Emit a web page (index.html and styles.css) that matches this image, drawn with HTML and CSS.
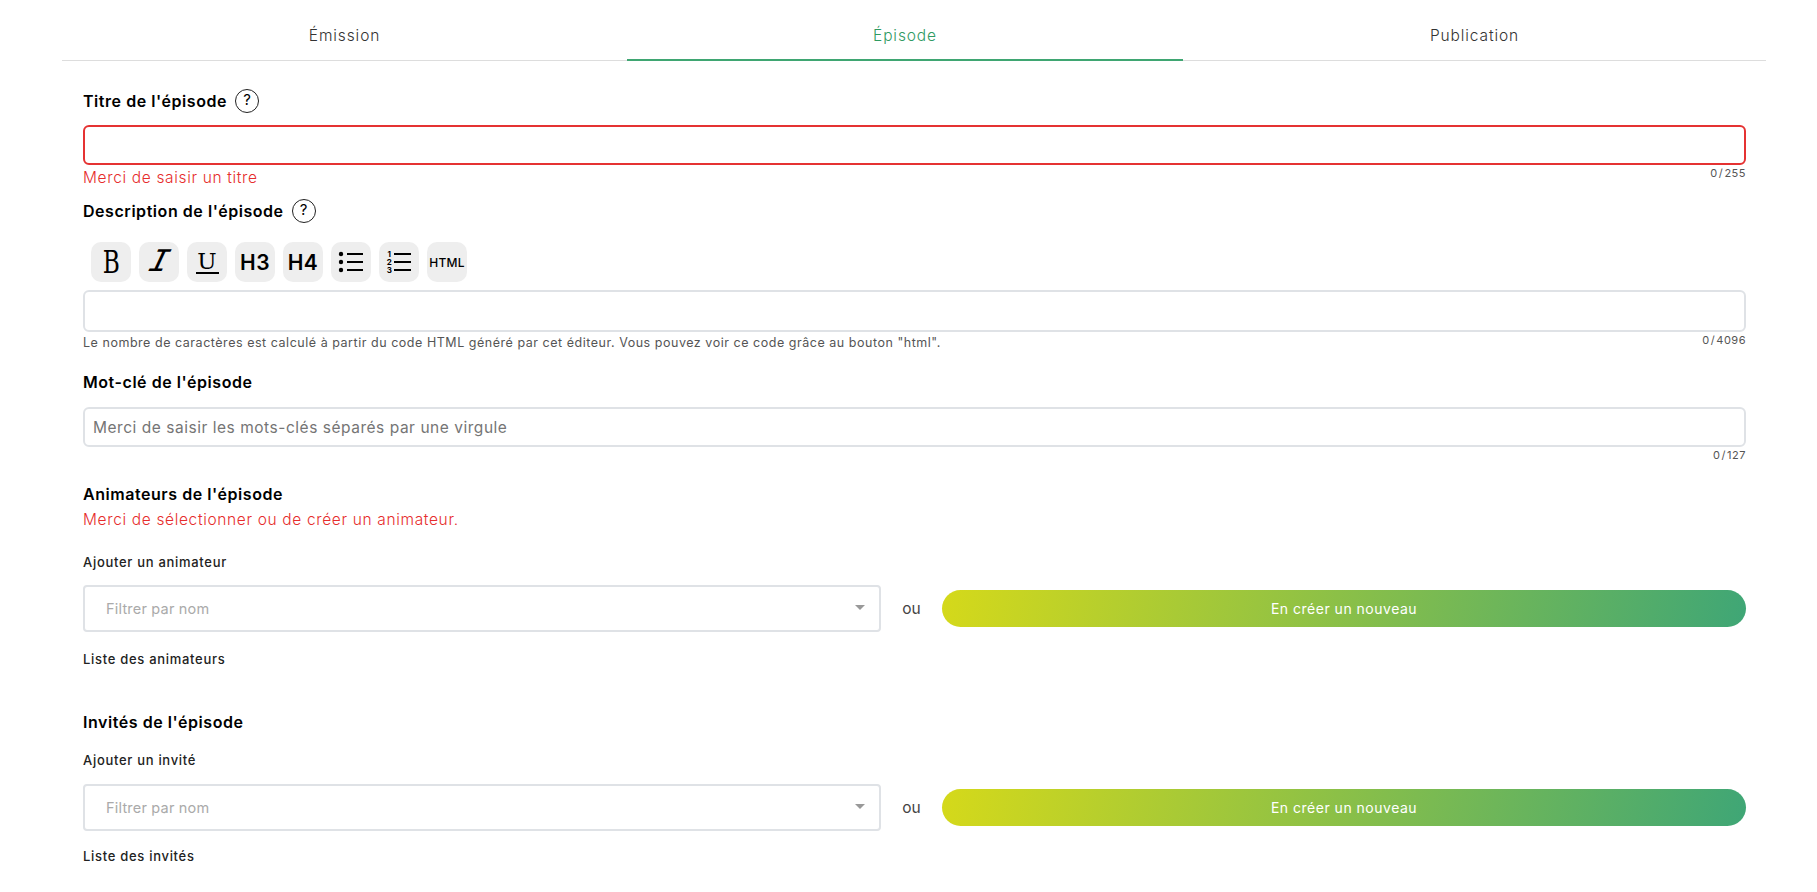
FILE: index.html
```html
<!DOCTYPE html>
<html lang="fr">
<head>
    <meta charset="UTF-8">
    <title>Épisode</title>
    <link rel="stylesheet" href="styles.css">
</head>
<body>
    <nav class="tabs">
        <a class="tab">Émission</a>
        <a class="tab active">Épisode</a>
        <a class="tab">Publication</a>
    </nav>

    <form class="episode-form">
        <div class="title-row title-first">
            <label class="field-title">Titre de l'épisode</label>
            <span class="help">?</span>
        </div>
        <input type="text" class="text-input has-error">
        <div class="under-row">
            <span class="error-text">Merci de saisir un titre</span>
            <span class="counter">0 / 255</span>
        </div>

        <div class="title-row title-desc">
            <label class="field-title">Description de l'épisode</label>
            <span class="help">?</span>
        </div>
        <div class="toolbar">
            <button type="button" class="tool tool-b"><span>B</span></button>
            <button type="button" class="tool tool-i"><span>I</span></button>
            <button type="button" class="tool tool-u"><span>U</span></button>
            <button type="button" class="tool">H3</button>
            <button type="button" class="tool">H4</button>
            <button type="button" class="tool">
                <svg width="40" height="40" viewBox="0 0 40 40">
                    <circle cx="10" cy="12" r="2.200"/><circle cx="10" cy="20" r="2.200"/><circle cx="10" cy="28" r="2.200"/>
                    <path d="M16 12h16M16 20h16M16 28h16" stroke="#000" stroke-width="1.800" fill="none"/>
                </svg>
            </button>
            <button type="button" class="tool">
                <svg width="40" height="40" viewBox="0 0 40 40">
                    <text class="num" x="10.500" y="14.500">1</text>
                    <text class="num" x="10.500" y="22.500">2</text>
                    <text class="num" x="10.500" y="30.500">3</text>
                    <path d="M15 12h17M15 20h17M15 28h17" stroke="#000" stroke-width="1.800" fill="none"/>
                </svg>
            </button>
            <button type="button" class="tool tool-html">HTML</button>
        </div>
        <div class="text-input editor"></div>
        <div class="under-row">
            <span class="hint">Le nombre de caractères est calculé à partir du code HTML généré par cet éditeur. Vous pouvez voir ce code grâce au bouton "html".</span>
            <span class="counter">0 / 4096</span>
        </div>

        <div class="title-row title-keyword">
            <label class="field-title">Mot-clé de l'épisode</label>
        </div>
        <input type="text" class="text-input" placeholder="Merci de saisir les mots-clés séparés par une virgule">
        <div class="under-row">
            <span></span>
            <span class="counter">0 / 127</span>
        </div>

        <section class="people people-hosts">
            <h2 class="field-title">Animateurs de l'épisode</h2>
            <p class="error-text people-error">Merci de sélectionner ou de créer un animateur.</p>
            <h3 class="sub-title">Ajouter un animateur</h3>
            <div class="picker-row">
                <div class="picker">
                    <span>Filtrer par nom</span>
                    <i class="caret"></i>
                </div>
                <span class="or">ou</span>
                <button type="button" class="create-btn">En créer un nouveau</button>
            </div>
            <h3 class="sub-title list-title">Liste des animateurs</h3>
        </section>

        <section class="people people-guests">
            <h2 class="field-title">Invités de l'épisode</h2>
            <h3 class="sub-title">Ajouter un invité</h3>
            <div class="picker-row">
                <div class="picker">
                    <span>Filtrer par nom</span>
                    <i class="caret"></i>
                </div>
                <span class="or">ou</span>
                <button type="button" class="create-btn">En créer un nouveau</button>
            </div>
            <h3 class="sub-title list-title">Liste des invités</h3>
        </section>
    </form>
</body>
</html>
```

FILE: styles.css
```css
* {
    box-sizing: border-box;
}

body {
    margin: 0;
    font-family: Inter, "Noto Sans", sans-serif;
    color: #000;
    background: #fff;
}

/* Onglets */
.tabs {
    display: grid;
    grid-template-columns: 565px 556px 583px;
    margin: 0 51px 0 62px;
    height: 61px;
    border-bottom: 1px solid #ddd;
}

.tab {
    text-align: center;
    font-size: 15.5px;
    font-weight: 300;
    line-height: 71px;
    height: 61px;
    color: #333;
    letter-spacing: 0.9px;
}

.tab.active {
    color: #2f9a62;
    border-bottom: 2px solid #3fa672;
}

/* Formulaire */
.episode-form {
    margin: 0 71px 0 83px;
}

.title-row {
    display: flex;
    align-items: center;
    gap: 8px;
    height: 24px;
}

.title-first {
    margin-top: 28px;
}

.title-desc {
    margin-top: 10px;
}

.title-keyword {
    margin-top: 16px;
}

.field-title {
    margin: 0;
    font-size: 16px;
    font-weight: 600;
    letter-spacing: 0.55px;
}

.help {
    width: 24px;
    height: 24px;
    border: 1.7px solid #222;
    border-radius: 50%;
    font-size: 15px;
    font-weight: 400;
    line-height: 20px;
    text-align: center;
}

.text-input {
    display: block;
    width: 100%;
    height: 40px;
    padding: 0 8px;
    border: 2px solid #dfe2e6;
    border-radius: 6px;
    background: #fff;
    outline: none;
    font-family: inherit;
    font-size: 15.5px;
    letter-spacing: 0.53px;
}

.text-input::placeholder {
    color: #757575;
    opacity: 1;
}

.title-first + .text-input {
    margin-top: 12px;
}

.title-keyword + .text-input {
    margin-top: 13px;
}

.has-error {
    border-color: #e53232;
}

.editor {
    height: 42px;
}

.under-row {
    display: flex;
    justify-content: space-between;
}

.error-text {
    padding-top: 1px;
    color: #e62c2c;
    font-size: 15.5px;
    font-weight: 300;
    line-height: 23px;
    letter-spacing: 0.65px;
}

.counter {
    font-size: 11px;
    line-height: 16px;
    color: #555;
    letter-spacing: 0.5px;
    word-spacing: -2.5px;
}

.hint {
    font-size: 12.5px;
    line-height: 22px;
    color: #555;
    letter-spacing: 0.53px;
}

/* Barre de l'éditeur */
.toolbar {
    display: flex;
    gap: 8px;
    margin: 19px 0 8px 8px;
}

.tool {
    display: flex;
    align-items: center;
    justify-content: center;
    width: 40px;
    height: 40px;
    padding: 0;
    border: none;
    border-radius: 10px;
    background: #eee;
    color: #000;
    font-family: inherit;
    font-size: 21px;
    font-weight: 600;
    letter-spacing: 0.5px;
}

.tool .num {
    font-size: 8px;
    font-weight: 700;
    text-anchor: middle;
}

.tool-b,
.tool-i,
.tool-u {
    font-weight: 400;
    letter-spacing: 0;
}

.tool-b span {
    font-family: "DejaVu Serif", serif;
    font-size: 31px;
    transform: scaleX(0.75);
}

.tool-i span {
    font-family: "Liberation Mono", monospace;
    font-size: 33px;
    font-style: italic;
    transform: skewX(-15deg);
}

.tool-u span {
    width: 23px;
    border-bottom: 2px solid #000;
    font-family: "DejaVu Serif", serif;
    font-size: 23px;
    line-height: 22px;
    text-align: center;
}

.tool-html {
    font-size: 12px;
    font-weight: 500;
    letter-spacing: 0.2px;
}

/* Animateurs et invités */
.people-hosts {
    padding-top: 19px;
}

.people-guests {
    padding-top: 43px;
}

.people .field-title {
    line-height: 24px;
}

.people-error {
    margin: 1px 0 0;
}

.sub-title {
    margin: 23px 0 15px;
    font-size: 13px;
    font-weight: 500;
    line-height: 16px;
    color: #222;
    letter-spacing: 0.7px;
}

.people-guests .sub-title {
    margin: 18px 0 16px;
}

.people .list-title {
    margin: 19px 0 0;
}

.people-guests .list-title {
    margin-top: 17px;
}

.picker-row {
    display: flex;
    align-items: center;
}

.picker {
    display: flex;
    align-items: center;
    justify-content: space-between;
    width: 798px;
    height: 47px;
    padding: 0 14px 0 21px;
    border: 2px solid #dfe2e6;
    border-radius: 4px;
    color: #aaa;
    font-size: 14.5px;
    letter-spacing: 0.2px;
}

.caret {
    width: 0;
    height: 0;
    border-top: 5px solid #999;
    border-left: 5.5px solid transparent;
    border-right: 5.5px solid transparent;
    margin-bottom: 3px;
}

.or {
    width: 61px;
    text-align: center;
    font-size: 15.5px;
    color: #444;
}

.create-btn {
    flex: 1;
    height: 37px;
    border: none;
    border-radius: 19px;
    background: linear-gradient(100deg, #d5d91a 0%, #3fa676 100%);
    color: #fff;
    font-family: inherit;
    font-size: 14px;
    letter-spacing: 0.5px;
}
```
